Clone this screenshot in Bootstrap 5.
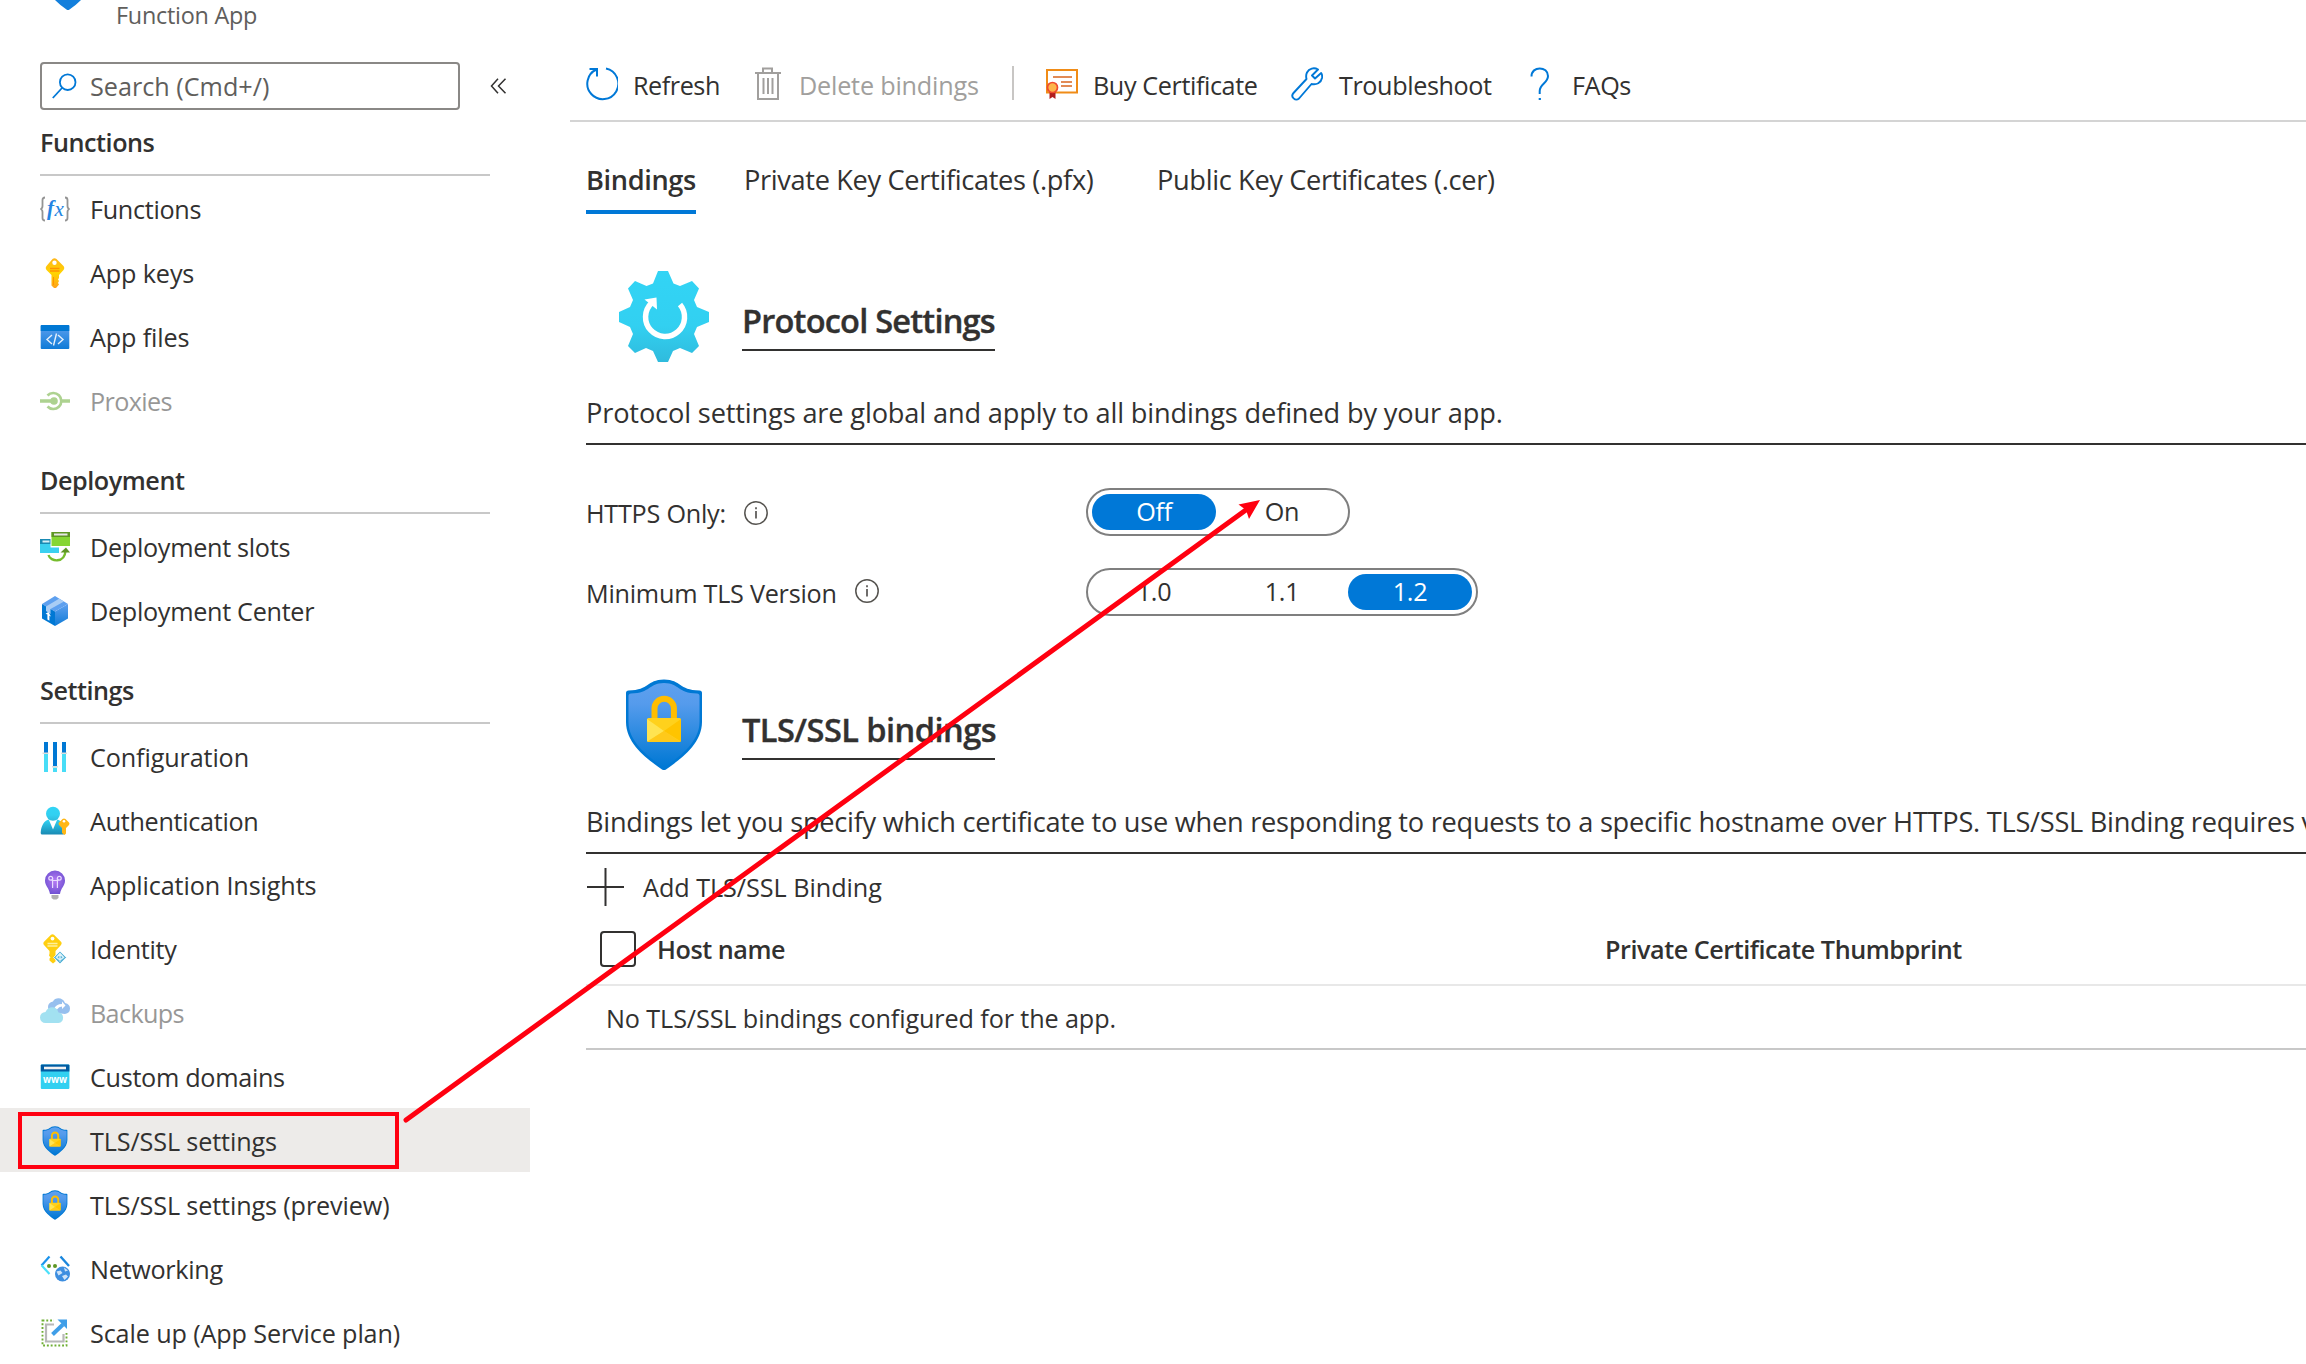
<!DOCTYPE html>
<html lang="en">
<head>
<meta charset="utf-8">
<meta name="viewport" content="width=device-width, initial-scale=1">
<title>TLS/SSL settings</title>
<link href="https://cdn.jsdelivr.net/npm/bootstrap@5.3.0/dist/css/bootstrap.min.css" rel="stylesheet">
<style>
  :root { --ink: #323130; --azure: #0078d7; --rule: #c8c8c8; }
  body { font-family: "Open Sans", "Noto Sans", sans-serif; font-size: 25.2px; letter-spacing: -.3px; line-height: 40px; color: var(--ink); width: 2306px; height: 1364px; overflow: hidden; background: #fff; }
  a { color: inherit; text-decoration: none; }
  svg { display: block; flex: none; }
  .blade { position: relative; width: 2306px; height: 1364px; overflow: hidden; }
  .side { width: 530px; }
  .kind { height: 62px; padding-left: 55px; color: #605e5c; font-size: 23.4px; gap: 33px; }
  .kind span { line-height: 30px; letter-spacing: -.25px; }
  .search-row { padding-left: 40px; gap: 30px; }
  .search-box { width: 420px; height: 48px; border: 2px solid #8a8886; border-radius: 4px; padding-left: 10px; gap: 12px; color: #605e5c; letter-spacing: 0; }
  .search-box span { line-height: 38px; padding-bottom: 1px; }
  .group-title { height: 82px; margin: 0 40px; border-bottom: 2px solid var(--rule); padding-bottom: 11px; font-weight: 600; letter-spacing: -.46px; line-height: 42px; }
  .group-title.first { height: 66px; }
  .entry { height: 64px; padding: 2px 0 0 40px; gap: 20px; white-space: nowrap; }
  .entry.active { background: #edebe9; }
  .entry.off > svg, .entry.off > span { opacity: .5; }
  .entry.off { letter-spacing: -.65px; }
  .entry.loose { letter-spacing: -.13px; }
  .content { margin-left: 40px; min-width: 0; white-space: nowrap; }
  .tools { height: 122px; border-bottom: 2px solid #d4d4d4; padding: 50px 0 0 16px; }
  .tool { height: 68px; }
  .tool span { padding-top: 2px; }
  .tool-a { width: 168px; gap: 15px; letter-spacing: -.45px; } .tool-b { width: 258px; gap: 17px; color: #a19f9d; letter-spacing: -.2px; }
  .tool-c { width: 245px; gap: 15px; letter-spacing: -.4px; } .tool-d { width: 233px; gap: 16px; letter-spacing: -.4px; } .tool-e { gap: 12px; letter-spacing: -.4px; }
  .divider { width: 2px; height: 34px; background: #c8c6c4; margin-right: 32px; }
  .inner { padding-left: 16px; }
  .tabs { height: 92px; font-size: 27.2px; letter-spacing: -.34px; }
  .tabs a { height: 92px; padding-top: 38px; }
  .tabs .current { font-weight: 600; border-bottom: 4px solid var(--azure); width: 110px; margin-right: 48px; letter-spacing: -.38px; }
  .tabs .second { width: 413px; }
  .section-one { padding-top: 56px; }
  .section-two { padding-top: 63px; }
  .heading { height: 92px; padding-left: 32px; gap: 32px; }
  .heading h2 { font-size: 32.6px; font-weight: 600; letter-spacing: -.8px; line-height: 44px; margin: 28px 0 0; padding: 1px 0 6px; border-bottom: 2px solid var(--ink); width: 253px; -webkit-text-stroke: .35px var(--ink); }
  .section-two h2 { letter-spacing: -.55px; }
  .about { font-size: 27.2px; letter-spacing: -.15px; height: 83px; padding-top: 31px; border-bottom: 2px solid var(--ink); margin: 0; overflow: hidden; }
  .section-two .about { letter-spacing: -.26px; }
  .settings { padding-top: 43px; gap: 32px; }
  .setting { height: 48px; }
  .setting .name { width: 500px; gap: 18px; padding-top: 2px; letter-spacing: -.24px; }
  .switch-box { border: 2px solid #7f7f7f; border-radius: 24px; height: 48px; padding: 4px; gap: 4px; }
  .switch-box span { width: 124px; height: 36px; line-height: 34px; border-radius: 18px; text-align: center; }
  .switch-box .sel { background: var(--azure); color: #fff; }
  .add { height: 60px; padding-top: 6px; gap: 18px; letter-spacing: -.04px; }
  .thead-row { height: 72px; border-bottom: 2px solid #e8e8e8; font-weight: 600; letter-spacing: -.46px; }
  .tick { width: 36px; height: 36px; border: 2px solid var(--ink); border-radius: 4px; margin: 0 21px 0 14px; }
  .host { width: 948px; }
  .none { height: 64px; border-bottom: 2px solid var(--rule); padding: 2px 0 0 20px; letter-spacing: -.11px; }
  .marks { position: absolute; left: 0; top: 0; pointer-events: none; }
</style>
<script src="https://cdn.jsdelivr.net/npm/bootstrap@5.3.0/dist/js/bootstrap.bundle.min.js"></script>
</head>
<body>
<svg width="0" height="0" class="position-absolute">
  <defs>
    <linearGradient id="gShield" x1="0" y1="0" x2="0" y2="1"><stop offset="0" stop-color="#5ea0ef"/><stop offset=".25" stop-color="#559bec"/><stop offset="1" stop-color="#0078d4"/></linearGradient>
    <linearGradient id="gCyan" x1="0" y1="0" x2="0" y2="1"><stop offset="0" stop-color="#32d4f5"/><stop offset=".6" stop-color="#32d0f1"/><stop offset="1" stop-color="#2fbbdd"/></linearGradient>
    <linearGradient id="gUser" x1="0" y1="0" x2="0" y2="1"><stop offset="0" stop-color="#32d4f5"/><stop offset="1" stop-color="#198ab3"/></linearGradient>
    <linearGradient id="gBlue" x1="0" y1="0" x2="0" y2="1"><stop offset="0" stop-color="#5ea0ef"/><stop offset="1" stop-color="#0f7bd7"/></linearGradient>
    <linearGradient id="gGold" x1="0" y1="0" x2="0" y2="1"><stop offset="0" stop-color="#ffb61a"/><stop offset=".5" stop-color="#ffd400"/><stop offset="1" stop-color="#fea11b"/></linearGradient>
    <radialGradient id="gBulb" cx=".5" cy=".45" r=".6"><stop offset="0" stop-color="#b77af4"/><stop offset="1" stop-color="#6b4fd0"/></radialGradient>
    <symbol id="shield" viewBox="0 0 92 92">
      <path d="M84 43c0 24-26 40-36 47.500q-2 1-4 0C34 83 8 67 8 43V14q0-2.500 2.500-2.500C32 11 28 1 46 .5 64 1 60 11 81.500 11.500q2.500 0 2.500 2.500z" fill="#0078d4"/>
      <path d="M81.500 43c0 22-24 37-33.500 44.500q-2 1-4 0C34.500 80 10.500 65 10.500 43V17q0-2.500 2.500-2.500C33 14 30 4.500 46 4c16 .5 13 10 33 10.500q2.500 0 2.500 2.500z" fill="url(#gShield)"/>
      <path d="M36.500 41V29.500a9.700 9.700 0 0 1 19.400 0V41" fill="none" stroke="#ffbd00" stroke-width="6"/>
      <rect x="29" y="39" width="34" height="24" rx="1.500" fill="#ffd11c"/>
      <path d="M29 62.500V40l17 12z" fill="#ffe452"/><path d="M63 62.500V40L46 52z" fill="#ffc400"/><path d="M29.500 63h33L46 52z" fill="#ffc91a"/>
    </symbol>
    <symbol id="info" viewBox="0 0 24 24"><circle cx="12" cy="12" r="11.200" fill="none" stroke="#55534f" stroke-width="1.500"/><path d="M12 10v7.500M12 6.300v2" stroke="#605e5c" stroke-width="1.800"/></symbol>
  </defs>
</svg>
<div class="blade d-flex">
  <nav class="side flex-shrink-0">
    <div class="kind d-flex align-items-start">
      <svg width="28" height="11" viewBox="0 0 28 11"><path d="M0 0h26Q20 6 14.500 9.500q-1.500 1-3 0Q6 6 0 0z" fill="#137fdc"/></svg>
      <span>Function App</span>
    </div>
    <div class="search-row d-flex align-items-center">
      <div class="search-box d-flex align-items-center">
        <svg width="26" height="26" viewBox="0 0 26 26" fill="none" stroke="#0078d7" stroke-width="1.800"><circle cx="15.700" cy="9.200" r="7.800"/><path d="M10 15L.8 25"/></svg>
        <span>Search (Cmd+/)</span>
      </div>
      <svg width="17" height="16" viewBox="0 0 17 16" fill="none" stroke="#323130" stroke-width="1.500"><path d="M8 .7L1.500 8 8 15.300M15.500.7L8.500 8l7 7.300"/></svg>
    </div>
    <div class="group-title first d-flex align-items-end">Functions</div>
    <a class="entry d-flex align-items-center" href="#"><svg width="30" height="30" viewBox="0 0 30 30"><g fill="none" stroke="#949494" stroke-width="1.800"><path d="M5 3.500q-2.500 0-2.500 2.500v6q0 2.500-2 3 2 .5 2 3v6q0 2.500 2.500 2.500M25 3.500q2.500 0 2.500 2.500v6q0 2.500 2 3-2 .5-2 3v6q0 2.500-2.500 2.500"/></g><text x="7" y="20.500" font-family="Liberation Serif, serif" font-style="italic" font-weight="700" font-size="21" letter-spacing="0" fill="#2384e2">f</text><text x="14.500" y="22" font-family="Liberation Serif, serif" font-style="italic" font-size="21" letter-spacing="0" fill="#2384e2">x</text></svg><span>Functions</span></a>
    <a class="entry loose d-flex align-items-center" href="#"><svg width="30" height="30" viewBox="0 0 30 30"><path d="M12.500 1q2-1.500 4 0l7 7q1.500 2 0 4l-4.500 5v3l-1 1.500 1 1.500-1 2 1 1.500-2.500 3q-1.500 1.500-3 0l-2-2V17l-5-5q-1.500-2 0-4z" fill="url(#gGold)"/><circle cx="14.500" cy="4.800" r="2.200" fill="#fff"/><path d="M10 10.500h9.500M10 13h9.500" stroke="#ff9300" stroke-width="1.300"/><path d="M13.500 19v8" stroke="#ff9300"/></svg><span>App keys</span></a>
    <a class="entry loose d-flex align-items-center" href="#"><svg width="30" height="30" viewBox="0 0 30 30"><rect x=".7" y="3" width="28.600" height="24" rx="1" fill="url(#gBlue)"/><path d="M.7 9V4q0-1 1-1h26.600q1 0 1 1v5z" fill="#0078d4"/><path d="M12 13l-5 4.500 5 4.500M18 13l5 4.500-5 4.500M16.500 11.500l-3 12" fill="none" stroke="#e6f0fb" stroke-width="1.400"/></svg><span>App files</span></a>
    <a class="entry off d-flex align-items-center" href="#"><svg width="30" height="30" viewBox="0 0 30 30" fill="none" stroke="#5ea624" stroke-width="3.400"><circle cx="14" cy="15" r="3.800" fill="#5ea624" stroke="none"/><path d="M0 15h12M22 15h8"/><path d="M7.500 9.500a8 8 0 1 1 0 11" stroke-width="2.600"/></svg><span>Proxies</span></a>

    <div class="group-title d-flex align-items-end">Deployment</div>
    <a class="entry d-flex align-items-center" href="#"><svg width="30" height="30" viewBox="0 0 30 30"><rect y="7" width="19" height="14" fill="#3bd0f0"/><path d="M0 7h19v5H0z" fill="#198ab3"/><path d="M2.500 8.500h7v2h-7z" fill="#d5eef6"/><path d="M10.500 0H30v15.500H10.500z" fill="#fff"/><rect x="11.500" width="18.500" height="14" fill="#86d633"/><path d="M11.500 0H30v5H11.500z" fill="#5e9624"/><path d="M14 1.500h13.500v2H14z" fill="#e6e6e6"/><path d="M8.500 23c2 7 16 8.500 17-4" fill="none" stroke="#76bc2d" stroke-width="2.400"/><path d="M20.500 20.500L26 15.500l4 5z" fill="#5e9624"/></svg><span>Deployment slots</span></a>
    <a class="entry d-flex align-items-center" href="#"><svg width="30" height="30" viewBox="0 0 30 30"><path d="M28 8v14.500L15 30V15.500z" fill="url(#gBlue)"/><path d="M28 8L15 15.500 2 8 15 0z" fill="#5ea0ef"/><path d="M15 15.500V30L2 22.500V8z" fill="#0078d4"/><path d="M6 10.500L19 2.700l5 2.800L10.500 13v5l-4.500-3z" fill="#a9cdf5"/><path d="M8.300 16l2.700 4.500-1.600-.8v5l-2-1.200v-5l-1.800-.8z" fill="#fff"/></svg><span>Deployment Center</span></a>

    <div class="group-title d-flex align-items-end">Settings</div>
    <a class="entry loose d-flex align-items-center" href="#"><svg width="30" height="30" viewBox="0 0 30 30"><path d="M4 0h4v11H4zM13 0h4v24h-4zM22 0h4v11h-4z" fill="#0078d4"/><path d="M4 12h4v18H4zM22 12h4v18h-4zM13 25.500h4V30h-4z" fill="#48ddf7"/><path d="M2.500 11.300h6M12 24.700h6M21 11.300h6" stroke="#ddd" stroke-width="1.600"/></svg><span>Configuration</span></a>
    <a class="entry d-flex align-items-center" href="#"><svg width="30" height="30" viewBox="0 0 30 30"><path d="M.7 27C1 20 4 14.500 9 13.500h8c5 1 7 6.500 7.500 13.500q0 1.500-1.500 1.500H2.200q-1.500 0-1.500-1.500z" fill="url(#gUser)"/><path d="M9 14h8l-4 9.500z" fill="#fff"/><circle cx="13" cy="7.700" r="7" fill="url(#gCyan)"/><path d="M22.500 13q1.500-1.200 3 0l3.500 3.500q1 1.200 0 2.400L26 22v5.500L24.500 29 22 27v-5l-3-3q-1-1.300 0-2.500z" fill="#ffb715"/><circle cx="24" cy="15.200" r="1.300" fill="#fff"/></svg><span>Authentication</span></a>
    <a class="entry loose d-flex align-items-center" href="#"><svg width="30" height="30" viewBox="0 0 30 30"><path d="M15 .5a10 10 0 0 1 10 10c0 5.500-4 7-5 13.500H10C9 17.500 5 16 5 10.500a10 10 0 0 1 10-10z" fill="url(#gBulb)"/><g fill="none" stroke="#eadcff" stroke-width="1.200"><circle cx="10.700" cy="8.300" r="1.900"/><circle cx="19.300" cy="8.300" r="1.900"/><path d="M12.600 8.300V18M17.400 8.300V18M11.500 10.500h7"/></g><path d="M11.500 25h7v3l-2 1.500h-3l-2-1.500z" fill="#b0b0b0"/></svg><span>Application Insights</span></a>
    <a class="entry d-flex align-items-center" href="#"><svg width="30" height="30" viewBox="0 0 30 30"><path d="M11 .8q1.500-1.200 3 0l7 7q1.300 1.500 0 3.200L15.500 17v10.500L13 29.500l-3.500-3v-2l1-1-1.500-2 .5-2L9.500 17 4 11q-1.300-1.600 0-3.200z" fill="#ffcf10"/><circle cx="12.500" cy="4.600" r="1.900" fill="#fff"/><path d="M7.500 9.500h10M7.500 12h10" stroke="#fff09a" stroke-width="1.700"/><path d="M20 17l6.500 6.500L20 30l-6.500-6.500z" fill="#5cb5d8" stroke="#fff" stroke-width=".8"/><path d="M20 19.500v8M16.500 23.500L20 26l3.500-2.500L20 19.500z" fill="none" stroke="#dff3fa" stroke-width="1.300"/></svg><span>Identity</span></a>
    <a class="entry off d-flex align-items-center" href="#"><svg width="30" height="30" viewBox="0 0 30 30"><path d="M13 14.500a5.500 5.500 0 0 1-5-5.500q0-4.500 5-5.500C15-1 23-1 25 5q5 1 5 5.500T25 16z" fill="#2f80df"/><path d="M14 11q2-5 8-5V3.500l3.500 4L22 11V8.500q-3 0-5 3z" fill="#fff"/><path d="M5.500 25a5.500 5.500 0 0 1 0-11C8 7.500 17 7.500 18.500 14.500a5.300 5.300 0 0 1 0 10.500z" fill="#48c5e4"/></svg><span>Backups</span></a>
    <a class="entry d-flex align-items-center" href="#"><svg width="30" height="30" viewBox="0 0 30 30"><rect x=".8" y="2.500" width="28.600" height="24.500" rx="1" fill="#32d0f1"/><path d="M.8 9.500v-6q0-1 1-1h26.600q1 0 1 1v6z" fill="#005ba1"/><path d="M4 4.700h22v2.600H4z" fill="#f2f2f2"/><text x="15" y="20.500" text-anchor="middle" textLength="24" lengthAdjust="spacingAndGlyphs" font-family="Open Sans, sans-serif" font-size="11" font-weight="700" letter-spacing="0" fill="#fff">www</text></svg><span>Custom domains</span></a>
    <a class="entry loose active d-flex align-items-center" href="#" aria-current="page"><svg width="30" height="30"><use href="#shield"/></svg><span>TLS/SSL settings</span></a>
    <a class="entry loose d-flex align-items-center" href="#"><svg width="30" height="30"><use href="#shield"/></svg><span>TLS/SSL settings (preview)</span></a>
    <a class="entry d-flex align-items-center" href="#"><svg width="30" height="30" viewBox="0 0 30 30"><path d="M9.500 2.500L1.500 11.500" stroke="#1b93eb" stroke-width="2.200"/><path d="M1.500 11.300L9.500 20" stroke="#4be0fa" stroke-width="2.200"/><path d="M20.500 2.500l8.500 9.500" stroke="#1b87dd" stroke-width="2.400"/><circle cx="9" cy="12" r="2" fill="#5e9624"/><circle cx="15" cy="12" r="2" fill="#5e9624"/><circle cx="22.500" cy="20" r="7.500" fill="#3d8ee0"/><path d="M16.500 17.500l4-1 2 2.500-4 2.500zM24 13.500l4 3-3 1zM22 22l4-1.500 2 2-3.500 3.500z" fill="#cfe3f8"/></svg><span>Networking</span></a>
    <a class="entry loose d-flex align-items-center" href="#"><svg width="30" height="30" viewBox="0 0 30 30" fill="none"><path d="M2.500 1.500v26h24V15M2.500 2.500H14" stroke="#6fae35" stroke-width="1.900" stroke-dasharray="1.900 1.900"/><path d="M14 6.500H6v17h17.500V16" stroke="#b8b8b8" stroke-width="2.200"/><path d="M12.500 16.500L23 6.500" stroke="#3f9ee8" stroke-width="4"/><path d="M17.500 1.500H27V11z" fill="#3f9ee8"/></svg><span>Scale up (App Service plan)</span></a>
  </nav>

  <main class="content flex-grow-1">
    <div class="tools d-flex align-items-start">
      <a class="tool tool-a d-flex align-items-center" href="#"><svg width="32" height="34" viewBox="0 0 32 34" fill="none" stroke="#0078d7" stroke-width="2"><path d="M20 1.500A15.500 15.500 0 1 1 10.500 2.500M3.500 2h7.500v7.500"/></svg><span>Refresh</span></a>
      <a class="tool tool-b d-flex align-items-center" href="#"><svg width="28" height="34" viewBox="0 0 28 34" fill="none" stroke="#a19f9d" stroke-width="2"><path d="M1 6h26M9 5V1.500h9V5M4 6v26h20V6M9.500 11v16M14 11v16M18.500 11v16"/></svg><span>Delete bindings</span></a>
      <div class="divider align-self-start mt-3"></div>
      <a class="tool tool-c d-flex align-items-center" href="#"><svg width="32" height="34" viewBox="0 0 32 34" fill="none"><path d="M1 3h30v22.500H1z" stroke="#f08c17" stroke-width="2"/><path d="M7 10h19M15 15h11M15 19h11" stroke="#d9661f" stroke-width="1.500"/><path d="M3.500 24v8l3-2 3 2v-8z" fill="#b01e1e"/><circle cx="6.500" cy="20.500" r="5" fill="#fdb44b" stroke="#ef4a2f" stroke-width="1.700"/></svg><span>Buy Certificate</span></a>
      <a class="tool tool-d d-flex align-items-center" href="#"><svg width="32" height="34" viewBox="0 0 32 34" fill="none" stroke="#0078d7" stroke-width="1.900"><path d="M27 2.500c-4-2.500-9-1-11 3-1 2-1 4.500-.5 6.500L2.500 26c-3.500 4 2 8.500 5.500 5.500L20.500 17c5 1 9.500-1 10.500-6 .3-2 0-4-.8-5L24 11.500l-3-3z" stroke-linejoin="round"/></svg><span>Troubleshoot</span></a>
      <a class="tool tool-e d-flex align-items-center" href="#"><svg width="36" height="34" viewBox="0 0 36 34" fill="none" stroke="#0078d7" stroke-width="2"><path d="M7.500 9.500C7.500-1.500 24-1 24 9c0 7-8.300 8-8.300 15v3M14.700 32h2.200"/></svg><span>FAQs</span></a>
    </div>
    <div class="inner">
      <div class="tabs d-flex">
        <a class="current" href="#">Bindings</a>
        <a class="second" href="#">Private Key Certificates (.pfx)</a>
        <a href="#">Public Key Certificates (.cer)</a>
      </div>

      <section class="section-one">
        <div class="heading d-flex align-items-start">
          <svg width="92" height="92" viewBox="0 0 92 92"><path d="M40 1h10l5.500 12.500L62 16l12-5 7 7.500L76 30l3 7 12 5v10l-12 5-3 7 5 12-7 7-12-5-7 3-5 11H40l-5-11-7-3-11 5-7-7 5-12-3-7L1 52V42l11-5 3-7-5-11.500 7-7.500 11.500 5L35 13.500z" fill="url(#gCyan)"/><path d="M62 34.500A19.500 19.500 0 1 1 33.500 33" fill="none" stroke="#fff" stroke-width="5.500"/><path d="M26.500 29.500l12-2 .5 12z" fill="#fff"/></svg>
          <h2>Protocol Settings</h2>
        </div>
        <p class="about">Protocol settings are global and apply to all bindings defined by your app.</p>
        <div class="settings d-flex flex-column">
          <div class="setting d-flex align-items-center">
            <div class="name d-flex align-items-center"><span>HTTPS Only:</span><svg width="24" height="24"><use href="#info"/></svg></div>
            <div class="switch-box d-flex"><span class="sel">Off</span><span>On</span></div>
          </div>
          <div class="setting d-flex align-items-center">
            <div class="name d-flex align-items-center"><span>Minimum TLS Version</span><svg class="mb-1" width="24" height="24"><use href="#info"/></svg></div>
            <div class="switch-box d-flex"><span>1.0</span><span>1.1</span><span class="sel">1.2</span></div>
          </div>
        </div>
      </section>

      <section class="section-two">
        <div class="heading d-flex align-items-start">
          <svg width="92" height="92"><use href="#shield"/></svg>
          <h2>TLS/SSL bindings</h2>
        </div>
        <p class="about">Bindings let you specify which certificate to use when responding to requests to a specific hostname over HTTPS. TLS/SSL Binding requires v</p>
        <a class="add d-flex align-items-center" href="#"><svg width="39" height="38" viewBox="0 0 39 38" stroke="#323130" stroke-width="2"><path d="M1 19h37M19.500 0v38"/></svg><span>Add TLS/SSL Binding</span></a>
        <div class="thead-row d-flex align-items-center"><i class="tick"></i><span class="host">Host name</span><span>Private Certificate Thumbprint</span></div>
        <div class="none d-flex align-items-center">No TLS/SSL bindings configured for the app.</div>
      </section>
    </div>
  </main>

  <svg class="marks" width="2306" height="1364" viewBox="0 0 2306 1364"><rect x="20" y="1114" width="377" height="53" fill="none" stroke="#ff0010" stroke-width="4"/><path d="M406 1120L1250 507" stroke="#ff0010" stroke-width="5" stroke-linecap="round"/><path d="M1260 500l-21.500 4.500 7.500 5.500 3 9z" fill="#ff0010"/></svg>
</div>
</body>
</html>
